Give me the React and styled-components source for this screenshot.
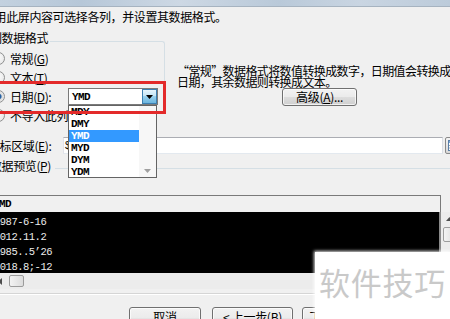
import React from "react";
import styled, { createGlobalStyle } from "styled-components";

const GlobalStyle = createGlobalStyle`
  html, body { margin: 0; padding: 0; }
  body {
    background: #f0f0f0;
    font-family: "Noto Sans CJK SC", "Noto Sans", sans-serif;
    font-size: 12px;
    color: #000;
    overflow: hidden;
  }
  u { text-decoration: underline; text-underline-offset: 1px; }
`;

const Page = styled.div`
  position: relative;
  width: 450px;
  height: 319px;
  overflow: hidden;
  background: #f0f0f0;
`;

const TitleStrip = styled.div`
  height: 6px;
  background: linear-gradient(90deg, #c3d1df 0%, #b6c7d8 18%, #cdd8e4 40%, #b9c9d9 62%, #c9d5e2 80%, #bccbda 100%);
  border-bottom: 1px solid #a6b3c0;
`;

const Sheet = styled.div`
  margin-left: -20px;
  width: 490px;
`;

const Intro = styled.div`
  margin-top: 4px;
  padding-left: 3px;
  line-height: 12px;
  letter-spacing: -0.4px;
  white-space: nowrap;
`;

const MainRow = styled.div`
  display: grid;
  grid-template-columns: 185px 1fr;
  column-gap: 12px;
  margin-top: 18px;
`;

const GroupBox = styled.div`
  height: 71px;
  border: 1px solid #d5dfe5;
  border-bottom: none;
  border-radius: 3px 3px 0 0;
`;

const Legend = styled.div`
  width: fit-content;
  margin: -10px 0 0 7px;
  padding: 0 2px;
  background: #f0f0f0;
  line-height: 12px;
  letter-spacing: -0.4px;
  white-space: nowrap;
`;

const RadioList = styled.div`
  margin-top: 5px;
  display: flex;
  flex-direction: column;
`;

const RadioRow = styled.div`
  display: flex;
  align-items: center;
  height: 19px;
  padding-left: 11px;
  white-space: nowrap;
  letter-spacing: -0.4px;
`;

const RadioDot = styled.span`
  flex: none;
  width: 13px;
  height: 13px;
  box-sizing: border-box;
  border-radius: 50%;
  border: 1px solid #8e8f8f;
  margin-right: 5px;
  background: ${(p) =>
    p.$checked
      ? "radial-gradient(circle, #123f73 0, #2a66a8 2.5px, #dcdcdc 3.6px, #f6f6f6 100%)"
      : "radial-gradient(circle at 40% 40%, #ffffff 0, #e2e2e2 100%)"};
`;

const RadioLabel = styled.span`
  width: ${(p) => (p.$width ? `${p.$width}px` : "auto")};
  line-height: 12px;
`;

const Combo = styled.div`
  position: relative;
  display: flex;
  align-items: center;
  justify-content: space-between;
  width: 90px;
  height: 17px;
  box-sizing: border-box;
  border: 1px solid #7a7a7a;
  background: #fff;
`;

const MonoText = styled.span`
  font-family: "Liberation Mono", "DejaVu Sans Mono", monospace;
  font-weight: bold;
  font-size: 11px;
  letter-spacing: -0.6px;
  line-height: 12px;
`;

const ComboValue = styled(MonoText)`
  padding-left: 3px;
`;

const ComboButton = styled.span`
  display: flex;
  align-items: center;
  justify-content: center;
  width: 15px;
  height: 15px;
  box-sizing: border-box;
  border: 1px solid #3c7fb1;
  background: linear-gradient(#e5f4fc 0%, #c4e5f6 45%, #98d1ef 50%, #6cb5de 100%);
`;

const DropList = styled.div`
  position: absolute;
  top: 16px;
  left: -1px;
  z-index: 2;
  width: 89px;
  height: 73px;
  box-sizing: border-box;
  border: 1px solid #646464;
  background: #fff;
  display: grid;
  grid-template-columns: 1fr 17px;
  overflow: hidden;
`;

const Items = styled.div`
  display: flex;
  flex-direction: column;
`;

const ListItem = styled(MonoText)`
  display: block;
  height: 12px;
  padding-left: 2px;
  background: ${(p) => (p.$selected ? "#3399ff" : "transparent")};
  color: ${(p) => (p.$selected ? "#fff" : "#000")};
`;

const ListScroll = styled.div`
  display: flex;
  flex-direction: column;
  justify-content: flex-end;
  align-items: center;
  padding-bottom: 5px;
  background: #f7f7f7;
`;

const RedFrame = styled.div`
  position: absolute;
  left: -10px;
  top: 81px;
  width: 176px;
  height: 33px;
  box-sizing: border-box;
  border: 3px solid #e32a2a;
  z-index: 3;
`;

const DescColumn = styled.div`
  padding-top: 24px;
`;

const Desc = styled.div`
  line-height: 11px;
  letter-spacing: -0.6px;
  white-space: nowrap;
`;

const WinButton = styled.div`
  display: flex;
  justify-content: center;
  align-items: ${(p) => (p.$top ? "flex-start" : "center")};
  box-sizing: border-box;
  width: ${(p) => p.$w}px;
  height: ${(p) => p.$h}px;
  padding-top: ${(p) => (p.$top ? "3px" : "0")};
  border: 1px solid #707070;
  border-radius: 3px;
  background: linear-gradient(#f2f2f2 0%, #ebebeb 48%, #dddddd 52%, #cfcfcf 100%);
  box-shadow: inset 0 0 0 1px rgba(255, 255, 255, 0.7);
  line-height: 12px;
  letter-spacing: -0.3px;
  white-space: nowrap;
  flex: none;
`;

const AdvancedButton = styled(WinButton)`
  margin: 1px 0 0 105px;
`;

const TargetRow = styled.div`
  display: flex;
  align-items: center;
  height: 17px;
  margin-top: 24px;
  padding-left: 8px;
`;

const FieldLabel = styled.span`
  flex: none;
  width: ${(p) => p.$width}px;
  line-height: 12px;
  letter-spacing: -0.4px;
  white-space: nowrap;
`;

const TextInput = styled.div`
  width: 380px;
  height: 17px;
  box-sizing: border-box;
  border: 1px solid #abadb3;
  border-color: #abadb3 #dbdfe6 #e3e9ef #e2e3ea;
  background: #fff;
  padding-left: 1px;
  font-family: "Liberation Sans", sans-serif;
  font-size: 11px;
  line-height: 15px;
  flex: none;
`;

const RangeButton = styled.span`
  display: flex;
  align-items: center;
  justify-content: center;
  margin-left: 2px;
  width: 18px;
  height: 17px;
  box-sizing: border-box;
  border: 1px solid #8a8a8a;
  border-radius: 2px;
  background: linear-gradient(#f4f4f4, #d8d8d8);
  flex: none;
`;

const PreviewHead = styled.div`
  display: flex;
  margin-top: 6px;
  height: 12px;
`;

const HeadLabel = styled.span`
  padding-left: 10px;
  line-height: 12px;
  letter-spacing: -0.4px;
  white-space: nowrap;
`;

const HeadLine = styled.span`
  flex: 1;
  margin: 8px 0 0 4px;
  height: 0;
  border-top: 1px solid #d5dfe5;
`;

const PreviewFrame = styled.div`
  display: grid;
  grid-template-columns: 461px 17px;
  grid-template-rows: 17px 61px 16px;
  margin-top: 23px;
`;

const ColumnHeader = styled.div`
  box-sizing: border-box;
  border-top: 1px solid #7a7a7a;
  border-right: 1px solid #7a7a7a;
  background: #f0f0f0;
  padding-left: 13px;
  display: flex;
  align-items: center;
`;

const DataArea = styled.div`
  background: #000;
  color: #ececec;
  border-right: 2px solid #8a8a8a;
  padding: 3px 0 0 14px;
  display: flex;
  flex-direction: column;
`;

const DataRow = styled.span`
  font-family: "Liberation Mono", "DejaVu Sans Mono", monospace;
  font-size: 10.5px;
  letter-spacing: -0.5px;
  line-height: 15px;
  white-space: nowrap;
`;

const VScroll = styled.div`
  background: #ececec;
  display: flex;
  flex-direction: column;
  align-items: center;
  padding-top: 5px;
`;

const Thumb = styled.span`
  box-sizing: border-box;
  width: ${(p) => p.$w}px;
  height: ${(p) => p.$h}px;
  border: 1px solid #9c9c9c;
  border-radius: 2px;
  background: linear-gradient(90deg, #f3f3f3, #dcdcdc);
`;

const VThumb = styled(Thumb)`
  margin-top: 6px;
`;

const HScroll = styled.div`
  background: #ececec;
  display: flex;
  align-items: center;
  padding-left: 12px;
`;

const ArrowBox = styled.span`
  display: flex;
  align-items: center;
  justify-content: center;
  width: 16px;
  height: 16px;
  margin-right: 1px;
`;

const Separator = styled.div`
  margin-top: 4px;
  border-top: 1px solid #d5d5d5;
  border-bottom: 1px solid #ffffff;
`;

const ButtonRow = styled.div`
  display: flex;
  margin-top: 12px;
  padding-left: 149px;
`;

const Gap = styled.span`
  width: ${(p) => p.$w}px;
  flex: none;
`;

const Watermark = styled.div`
  position: absolute;
  left: 315px;
  top: 252px;
  right: 0;
  bottom: 0;
  z-index: 4;
  background: #ffffff;
  box-shadow: 0 0 3px 1px rgba(255, 255, 255, 0.9);
  display: flex;
  align-items: center;
  justify-content: center;
  padding-bottom: 9px;
  box-sizing: border-box;
  font-size: 31px;
  letter-spacing: 0.7px;
  color: #c9c9c9;
  white-space: nowrap;
`;

const Tri = ({ dir = "down", color = "#000", size = 7 }) => {
  const pts = {
    down: "0,0 7,0 3.5,4",
    up: "0,4 7,4 3.5,0",
    left: "4,0 4,7 0,3.5",
  }[dir];
  const w = dir === "left" ? 4 : size;
  const h = dir === "left" ? size : 4;
  return (
    <svg width={w} height={h} viewBox={dir === "left" ? "0 0 4 7" : "0 0 7 4"}>
      <polygon points={pts} fill={color} />
    </svg>
  );
};

const RangeIcon = () => (
  <svg width="12" height="11" viewBox="0 0 12 11">
    <rect x="0.5" y="0.5" width="11" height="10" fill="#fff" stroke="#5a7fa8" />
    <rect x="1" y="1" width="10" height="2" fill="#7aa7d6" />
    <line x1="1" y1="5.5" x2="11" y2="5.5" stroke="#9ab" />
    <line x1="1" y1="8" x2="11" y2="8" stroke="#9ab" />
    <line x1="4.5" y1="3" x2="4.5" y2="10" stroke="#9ab" />
  </svg>
);

const items = ["MDY", "DMY", "YMD", "MYD", "DYM", "YDM"];
const rows = ["1987-6-16", "2012.11.2", "1985..5\u201926", "2018.8;-12"];

export default function App() {
  return (
    <Page lang="zh-CN">
      <GlobalStyle />
      <TitleStrip />
      <Sheet>
        <Intro>使用此屏内容可选择各列，并设置其数据格式。</Intro>
        <MainRow>
          <GroupBox>
            <Legend>列数据格式</Legend>
            <RadioList>
              <RadioRow>
                <RadioDot />
                <RadioLabel>常规(<u>G</u>)</RadioLabel>
              </RadioRow>
              <RadioRow>
                <RadioDot />
                <RadioLabel>文本(<u>T</u>)</RadioLabel>
              </RadioRow>
              <RadioRow>
                <RadioDot $checked />
                <RadioLabel $width={58}>日期(<u>D</u>):</RadioLabel>
                <Combo>
                  <ComboValue>YMD</ComboValue>
                  <ComboButton>
                    <Tri dir="down" />
                  </ComboButton>
                  <DropList>
                    <Items>
                      {items.map((it) => (
                        <ListItem key={it} $selected={it === "YMD"}>
                          {it}
                        </ListItem>
                      ))}
                    </Items>
                    <ListScroll>
                      <Tri dir="down" color="#a0a0a0" size={7} />
                    </ListScroll>
                  </DropList>
                </Combo>
              </RadioRow>
              <RadioRow>
                <RadioDot />
                <RadioLabel>不导入此列(跳过)(<u>I</u>)</RadioLabel>
              </RadioRow>
            </RadioList>
          </GroupBox>
          <DescColumn>
            <Desc>
              “常规”数据格式将数值转换成数字，日期值会转换成
              <br />
              日期，其余数据则转换成文本。
            </Desc>
            <AdvancedButton $w={75} $h={18}>
              高级(<u>A</u>)...
            </AdvancedButton>
          </DescColumn>
        </MainRow>
        <TargetRow>
          <FieldLabel $width={75}>目标区域(<u>E</u>):</FieldLabel>
          <TextInput>$A$1</TextInput>
          <RangeButton>
            <RangeIcon />
          </RangeButton>
        </TargetRow>
        <PreviewHead>
          <HeadLabel>数据预览(<u>P</u>)</HeadLabel>
          <HeadLine />
        </PreviewHead>
        <PreviewFrame>
          <ColumnHeader>
            <MonoText>YMD</MonoText>
          </ColumnHeader>
          <div />
          <DataArea>
            {rows.map((r) => (
              <DataRow key={r}>{r}</DataRow>
            ))}
          </DataArea>
          <VScroll>
            <Tri dir="up" color="#4d4d4d" />
            <VThumb $w={13} $h={15} />
          </VScroll>
          <HScroll>
            <ArrowBox>
              <Tri dir="left" color="#4d4d4d" />
            </ArrowBox>
            <Thumb $w={15} $h={12} />
          </HScroll>
          <div />
        </PreviewFrame>
        <Separator />
        <ButtonRow>
          <WinButton $w={72} $h={23} $top>
            取消
          </WinButton>
          <Gap $w={11} />
          <WinButton $w={81} $h={23} $top>
            &lt; 上一步(<u>B</u>)
          </WinButton>
          <Gap $w={9} />
          <WinButton $w={75} $h={23} $top>
            下一步(<u>N</u>) &gt;
          </WinButton>
        </ButtonRow>
      </Sheet>
      <RedFrame />
      <Watermark>软件技巧</Watermark>
    </Page>
  );
}
